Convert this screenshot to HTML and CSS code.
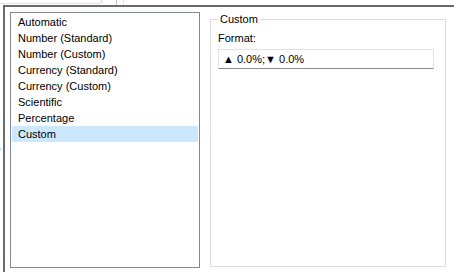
FILE: index.html
```html
<!DOCTYPE html>
<html lang="en">
<head>
    <meta charset="UTF-8">
    <title>Number Format</title>
    <link rel="stylesheet" href="styles.css">
</head>
<body>

    <!-- window behind the dialog -->
    <div class="backdrop">
        <div class="backdrop-tab"></div>
        <div class="backdrop-line dark"></div>
        <div class="backdrop-line light"></div>
    </div>
    <span class="backdrop-text">s</span>

    <div class="dialog">
        <ul class="format-list">
            <li>Automatic</li>
            <li>Number (Standard)</li>
            <li>Number (Custom)</li>
            <li>Currency (Standard)</li>
            <li>Currency (Custom)</li>
            <li>Scientific</li>
            <li>Percentage</li>
            <li class="selected">Custom</li>
        </ul>

        <fieldset class="group">
            <legend>Custom</legend>
            <label class="field-label">Format:</label>
            <div class="text-input">▲ 0.0%;▼ 0.0%</div>
        </fieldset>
    </div>

</body>
</html>
```

FILE: styles.css
```css
body {
    font-family: "Liberation Sans", Arial, sans-serif;
    font-size: 11px;
    color: #000;
    background: #fff;
    margin: 0;
    width: 454px;
    height: 272px;
    overflow: hidden;
    position: relative;
}
.backdrop {
    display: flex;
    height: 5px;
    background: #fff;
}
.backdrop-tab {
    width: 101px;
    height: 3px;
    border-right: 1px solid #d6d6d6;
    border-bottom: 1px solid #e2e2e2;
    border-bottom-right-radius: 3px;
}
.backdrop-line {
    width: 1px;
    height: 5px;
}
.backdrop-line.dark {
    margin-left: 14px;
    background: #c4c4c4;
}
.backdrop-line.light {
    margin-left: 6px;
    background: #e4e4e4;
}
.backdrop-text {
    position: absolute;
    left: -5px;
    top: 141px;
    line-height: 13px;
}
.dialog {
    display: flex;
    align-items: flex-start;
    gap: 10px;
    margin-left: 3px;
    width: 446px;
    height: 300px;
    padding: 5px 0 0 5px;
    border: 2px solid #6a6a6a;
    border-bottom: none;
    background: #fff;
    position: relative;
}
.format-list {
    list-style: none;
    margin: 0;
    padding: 1px 0 0 0;
    width: 188px;
    height: 253px;
    border: 1px solid #828790;
}
.format-list li {
    height: 16px;
    line-height: 16px;
    margin: 0 1px;
    padding-left: 6px;
}
.format-list li.selected {
    background: #cce8ff;
    border-radius: 2px;
}
.group {
    margin: 1px 0 0 0;
    padding: 0 9px 0 7px;
    width: 218px;
    height: 252px;
    border: 1px solid #dcdcdc;
}
.group legend {
    padding: 0 2px;
    line-height: 13px;
}
.field-label {
    display: block;
    line-height: 13px;
    margin-top: 6px;
}
.text-input {
    margin-top: 4px;
    width: 210px;
    height: 18px;
    line-height: 18px;
    padding-left: 4px;
    border: 1px solid #e3e3e3;
    border-bottom-color: #8a8a8a;
}
```
